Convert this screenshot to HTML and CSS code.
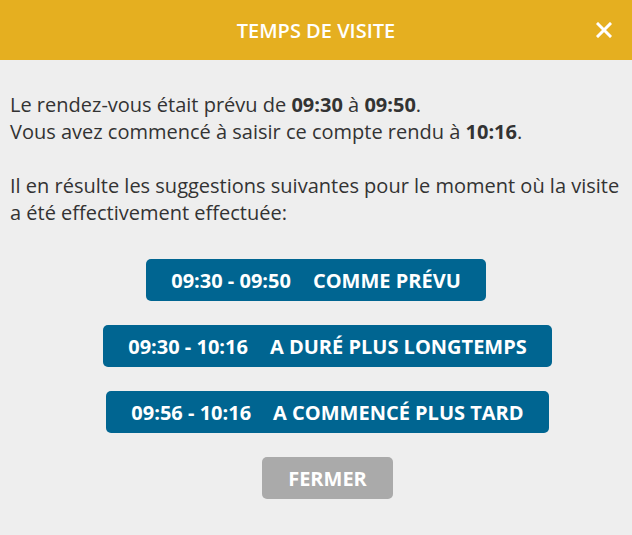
FILE: index.html
```html
<!DOCTYPE html>
<html lang="fr">

<head>
    <meta charset="UTF-8">
    <meta name="viewport" content="width=device-width, initial-scale=1.0">
    <title>Temps de visite</title>
    <link rel="stylesheet" href="styles.css">
</head>

<body>
    <div class="modal">
        <div class="entete">
            <span class="titre">TEMPS DE VISITE</span>
            <span class="fermer-x">
                <svg width="16" height="16" viewBox="0 0 16 16">
                    <path d="M2 2 L14 14 M14 2 L2 14" stroke="#fff" stroke-width="3" stroke-linecap="square" fill="none" />
                </svg>
            </span>
        </div>

        <div class="contenu">
            <p class="texte">
                Le rendez-vous était prévu de <b>09:30</b> à <b>09:50</b>.<br>
                Vous avez commencé à saisir ce compte rendu à <b>10:16</b>.<br>
                <br>
                Il en résulte les suggestions suivantes pour le moment où la visite a été effectivement effectuée:
            </p>

            <div class="boutons">
                <button class="choix">09:30 - 09:50<span class="espace"></span>COMME PRÉVU</button>
                <button class="choix decale">09:30 - 10:16<span class="espace"></span>A DURÉ PLUS LONGTEMPS</button>
                <button class="choix decale">09:56 - 10:16<span class="espace"></span>A COMMENCÉ PLUS TARD</button>
                <button class="fermer decale">FERMER</button>
            </div>
        </div>
    </div>
</body>

</html>
```

FILE: styles.css
```css
body {
    margin: 0;
    background-color: #eeeeee;
    font-family: "Open Sans", "Liberation Sans", sans-serif;
}

.modal {
    width: 632px;
    height: 535px;
    background-color: #eeeeee;
}

.entete {
    height: 60px;
    background-color: #e5af20;
    display: flex;
    align-items: center;
    justify-content: center;
    position: relative;
}

.titre {
    color: white;
    font-size: 20px;
    font-weight: 600;
}

.fermer-x {
    position: absolute;
    right: 20px;
    top: 22px;
    width: 16px;
    height: 16px;
}

.fermer-x svg {
    display: block;
}

.contenu {
    padding: 31px 10px 0 10px;
}

.texte {
    margin: 0;
    font-size: 20px;
    line-height: 27px;
    color: #333333;
}

.texte b {
    font-weight: 700;
}

.boutons {
    margin-top: 33px;
    display: flex;
    flex-direction: column;
    align-items: center;
    gap: 24px;
}

.choix, .fermer {
    border: none;
    border-radius: 5px;
    height: 42px;
    padding: 0 25px;
    font-family: "Open Sans", "Liberation Sans", sans-serif;
    font-size: 20px;
    font-weight: 700;
    color: white;
}

.choix {
    background-color: #006591;
}

.decale {
    margin-left: 23px;
}

.espace {
    display: inline-block;
    width: 22px;
}

.fermer {
    background-color: #aaaaaa;
    padding: 0 26px;
}
```
